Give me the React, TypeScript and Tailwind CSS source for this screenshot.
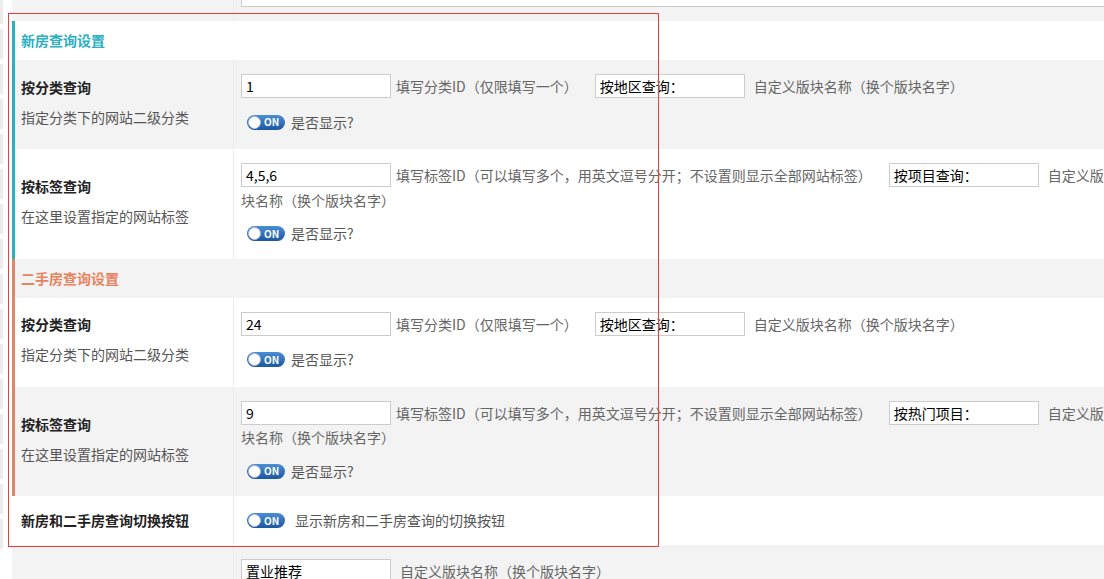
import React from 'react';

const Toggle = () => (
    <span className="relative inline-flex h-[15px] w-[38px] shrink-0 items-center rounded-full bg-linear-to-b from-[#4a8fd6] to-[#1d57a2]">
        <span className="absolute left-[1px] top-[1px] h-[13px] w-[13px] rounded-full border border-[#aebdd0] bg-white" />
        <span className="ml-[17px] text-[10px] font-bold leading-none text-white">ON</span>
    </span>
);

const Field = ({ value }: { value: string }) => (
    <input
        readOnly
        value={value}
        className="inline-block h-[24px] w-[150px] border border-[#cccccc] bg-white px-[4px] align-middle text-[14px] text-black outline-none"
    />
);

type RowProps = {
    title: string;
    desc: string;
    id: string;
    help: string;
    name: string;
    bg: string;
    border: string;
    pb: string;
};

const QueryRow = ({ title, desc, id, help, name, bg, border, pb }: RowProps) => (
    <div className={`flex border-l-[3px] ${border} ${bg}`}>
        <div className="flex w-[218px] shrink-0 flex-col justify-center pb-[6px] pl-[6px]">
            <div className="font-bold leading-[20px] text-[#222]">{title}</div>
            <div className="mt-[10px] leading-[20px] text-[#555]">{desc}</div>
        </div>
        <div className={`min-w-0 flex-1 border-l border-[#ececec] pl-[7px] pt-[14px] ${pb}`}>
            <div className="leading-[20px]">
                <Field value={id} />
                <span className="ml-[5px] mr-[17px] align-middle text-[#666]">{help}</span>
                <Field value={name} />
                <span className="ml-[9px] align-middle text-[#666]">自定义版块名称（换个版块名字）</span>
            </div>
            <div className="mt-[14px] flex h-[20px] items-center pl-[6px]">
                <Toggle />
                <span className="ml-[6px] text-[#555]">是否显示?</span>
            </div>
        </div>
    </div>
);

const SectionHead = ({ title, color, bg, border }: { title: string; color: string; bg: string; border: string }) => (
    <div className={`flex h-[39px] items-center border-l-[3px] pl-[6px] ${border} ${bg}`}>
        <span className={`font-bold ${color}`}>{title}</span>
    </div>
);

const App = () => {
    const strip = [24, 30, 30, 30, 30, 30, 30, 30, 30, 30, 30, 30, 30, 30, 30, 30];

    return (
        <div className="relative h-[579px] w-[1104px] overflow-hidden bg-white font-['Noto_Sans_CJK_SC',sans-serif] text-[14px]">
            <div className="flex w-[1106px]">
                {/* scrolled-off side menu */}
                <div className="flex w-[3px] shrink-0 flex-col gap-[5px]">
                    {strip.map((h, i) => (
                        <div key={i} className="bg-[#ececec]" style={{ height: h }} />
                    ))}
                </div>

                <div className="ml-[9px] min-w-0 flex-1">
                    {/* tail of the previous row */}
                    <div className="flex h-[21px] bg-[#f3f3f3]">
                        <div className="w-[221px] shrink-0" />
                        <div className="min-w-0 flex-1 border-l border-[#ececec] pl-[7px]">
                            <div className="h-[7px] border border-t-0 border-[#cccccc] bg-white" />
                        </div>
                    </div>

                    <SectionHead title="新房查询设置" color="text-[#2bb0c2]" bg="bg-white" border="border-[#2bb0c2]" />
                    <QueryRow
                        title="按分类查询"
                        desc="指定分类下的网站二级分类"
                        id="1"
                        help="填写分类ID（仅限填写一个）"
                        name="按地区查询："
                        bg="bg-[#f3f3f3]"
                        border="border-[#2bb0c2]"
                        pb="pb-[17px]"
                    />
                    <QueryRow
                        title="按标签查询"
                        desc="在这里设置指定的网站标签"
                        id="4,5,6"
                        help="填写标签ID（可以填写多个，用英文逗号分开；不设置则显示全部网站标签）"
                        name="按项目查询："
                        bg="bg-white"
                        border="border-[#2bb0c2]"
                        pb="pb-[15px]"
                    />

                    <SectionHead title="二手房查询设置" color="text-[#e8825f]" bg="bg-[#f3f3f3]" border="border-[#e0876a]" />
                    <QueryRow
                        title="按分类查询"
                        desc="指定分类下的网站二级分类"
                        id="24"
                        help="填写分类ID（仅限填写一个）"
                        name="按地区查询："
                        bg="bg-white"
                        border="border-[#e0876a]"
                        pb="pb-[17px]"
                    />
                    <QueryRow
                        title="按标签查询"
                        desc="在这里设置指定的网站标签"
                        id="9"
                        help="填写标签ID（可以填写多个，用英文逗号分开；不设置则显示全部网站标签）"
                        name="按热门项目："
                        bg="bg-[#f3f3f3]"
                        border="border-[#e0876a]"
                        pb="pb-[15px]"
                    />

                    <div className="flex h-[49px] bg-white">
                        <div className="flex w-[221px] shrink-0 items-center pl-[9px] font-bold text-[#222]">
                            新房和二手房查询切换按钮
                        </div>
                        <div className="flex min-w-0 flex-1 items-center border-l border-[#ececec] pl-[13px]">
                            <Toggle />
                            <span className="ml-[10px] text-[#555]">显示新房和二手房查询的切换按钮</span>
                        </div>
                    </div>

                    <div className="flex h-[60px] bg-[#f3f3f3]">
                        <div className="w-[221px] shrink-0" />
                        <div className="min-w-0 flex-1 border-l border-[#ececec] pl-[7px] pt-[14px] leading-[20px]">
                            <Field value="置业推荐" />
                            <span className="ml-[9px] align-middle text-[#666]">自定义版块名称（换个版块名字）</span>
                        </div>
                    </div>
                </div>
            </div>

            {/* red annotation box */}
            <div className="pointer-events-none absolute left-[8px] top-[13px] h-[534px] w-[651px] border border-[#f23b3b]" />
        </div>
    );
};

export default App;
